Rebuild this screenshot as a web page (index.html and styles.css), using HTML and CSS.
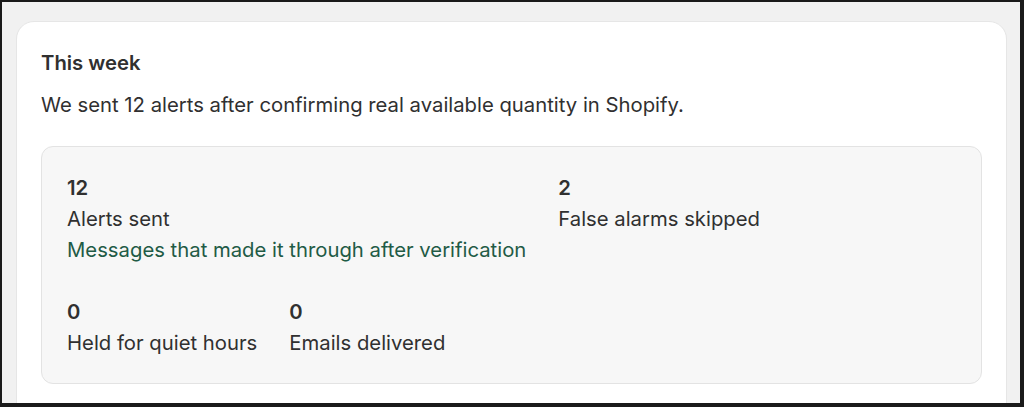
FILE: index.html
```html
<!DOCTYPE html>
<html lang="en">
<head>
  <meta charset="UTF-8">
  <meta name="viewport" content="width=device-width, initial-scale=1.0">
  <title>Weekly summary</title>
  <link rel="stylesheet" href="styles.css">
</head>
<body>
  <div class="card">
    <h2 class="card-title">This week</h2>
    <p class="card-text">We sent 12 alerts after confirming real available quantity in Shopify.</p>
    <div class="stats">
      <div class="stat">
        <div class="stat-value">12</div>
        <div class="stat-label">Alerts sent</div>
        <div class="stat-note">Messages that made it through after verification</div>
      </div>
      <div class="stat">
        <div class="stat-value">2</div>
        <div class="stat-label">False alarms skipped</div>
      </div>
      <div class="stat">
        <div class="stat-value">0</div>
        <div class="stat-label">Held for quiet hours</div>
      </div>
      <div class="stat">
        <div class="stat-value">0</div>
        <div class="stat-label">Emails delivered</div>
      </div>
    </div>
  </div>
</body>
</html>
```

FILE: styles.css
```css
html {
  background-color: #1a1a1a;
}
body {
  font-family: Inter, "Noto Sans", sans-serif;
  margin: 0;
  height: 407px;
  box-sizing: border-box;
  border-style: solid;
  border-color: #1a1a1a;
  border-width: 2px 4px 4px 2px;
  background-color: #f1f1f1;
  color: #303030;
  overflow: hidden;
}
.card {
  margin: 19px 13px 0 14px;
  padding: 25px 24px 40px 24px;
  background-color: #fff;
  border: 1px solid #e6e6e6;
  border-radius: 18px;
  box-shadow: 0 1px 0 #e3e3e3;
}
.card-title {
  margin: 0;
  font-size: 20.3px;
  font-weight: 600;
  line-height: 31px;
}
.card-text {
  margin: 11px 0 0 0;
  font-size: 20.3px;
  line-height: 31px;
}
.stats {
  margin-top: 26px;
  display: flex;
  flex-wrap: wrap;
  gap: 31px 32px;
  padding: 25px;
  background-color: #f7f7f7;
  border: 1px solid #e3e3e3;
  border-radius: 12px;
}
.stat {
  font-size: 20.3px;
  line-height: 31px;
}
.stat-value {
  font-weight: 600;
}
.stat-note {
  color: #1f5b46;
}
```
